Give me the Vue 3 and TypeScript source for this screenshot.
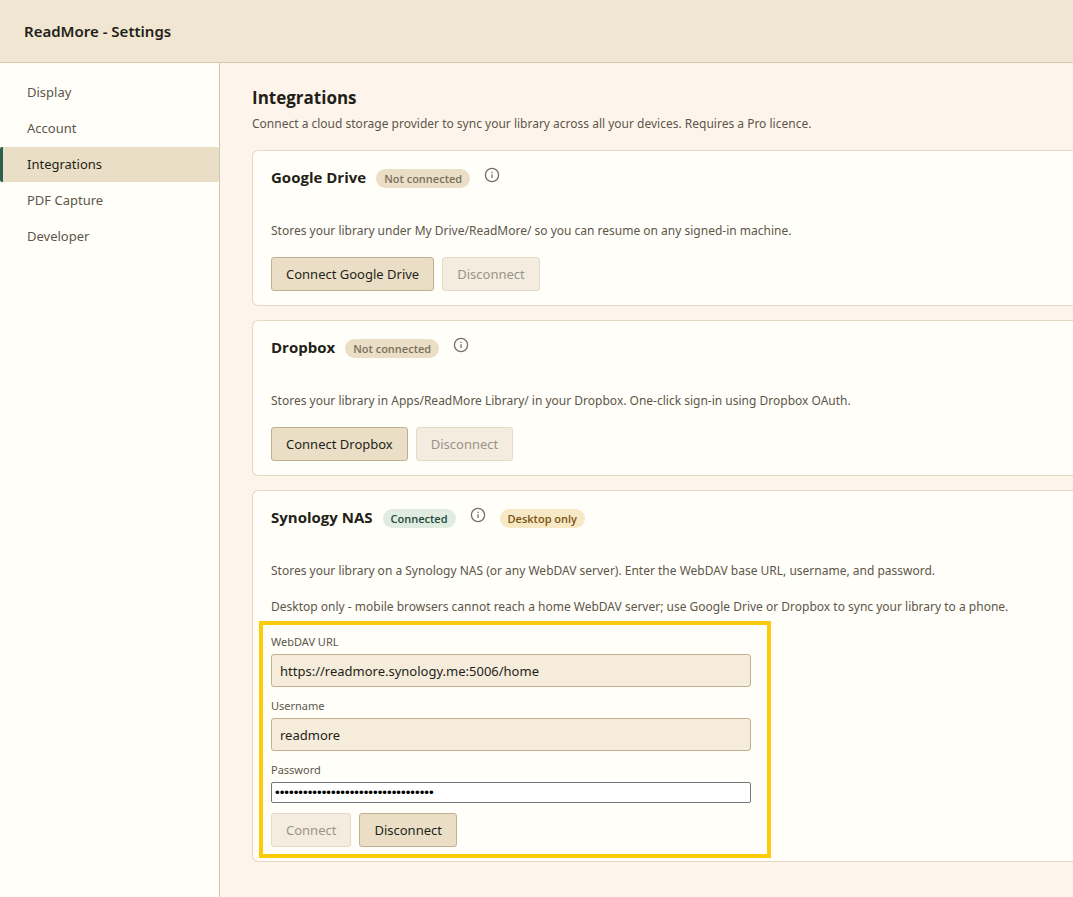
<script setup lang="ts">
import { ref } from 'vue'

interface Provider {
  id: string
  name: string
  description: string
  connectLabel: string
}

const sections: string[] = ['Display', 'Account', 'Integrations', 'PDF Capture', 'Developer']
const active = ref('Integrations')

const providers: Provider[] = [
  {
    id: 'google-drive',
    name: 'Google Drive',
    description: 'Stores your library under My Drive/ReadMore/ so you can resume on any signed-in machine.',
    connectLabel: 'Connect Google Drive',
  },
  {
    id: 'dropbox',
    name: 'Dropbox',
    description: 'Stores your library in Apps/ReadMore Library/ in your Dropbox. One-click sign-in using Dropbox OAuth.',
    connectLabel: 'Connect Dropbox',
  },
]

const url = ref('https://readmore.synology.me:5006/home')
const username = ref('readmore')
const password = ref('x'.repeat(34))
</script>

<template>
  <div class="page">
    <header class="topbar">
      <h1>ReadMore - Settings</h1>
    </header>
    <div class="body">
      <nav class="sidebar" aria-label="Settings sections">
        <a
          v-for="section in sections"
          :key="section"
          href="#"
          :class="['nav-item', { active: section === active }]"
          @click.prevent="active = section"
        >{{ section }}</a>
      </nav>
      <main class="content">
        <h2>Integrations</h2>
        <p class="lead">Connect a cloud storage provider to sync your library across all your devices. Requires a Pro licence.</p>

        <section v-for="p in providers" :key="p.id" class="card">
          <div class="card-head">
            <h3>{{ p.name }}</h3>
            <span class="badge">Not connected</span>
            <button type="button" class="info" :aria-label="'About ' + p.name">
              <svg viewBox="0 0 16 16" width="16" height="16" fill="none" stroke="currentColor">
                <circle cx="8" cy="8" r="6.6" stroke-width="1.3" />
                <path d="M8 7.3v3.6M8 4.8v1.2" stroke-width="1.3" />
              </svg>
            </button>
          </div>
          <p class="desc">{{ p.description }}</p>
          <div class="actions">
            <button type="button" class="btn">{{ p.connectLabel }}</button>
            <button type="button" class="btn" disabled>Disconnect</button>
          </div>
        </section>

        <section class="card">
          <div class="card-head">
            <h3>Synology NAS</h3>
            <span class="badge ok">Connected</span>
            <button type="button" class="info" aria-label="About Synology NAS">
              <svg viewBox="0 0 16 16" width="16" height="16" fill="none" stroke="currentColor">
                <circle cx="8" cy="8" r="6.6" stroke-width="1.3" />
                <path d="M8 7.3v3.6M8 4.8v1.2" stroke-width="1.3" />
              </svg>
            </button>
            <span class="badge warn">Desktop only</span>
          </div>
          <p class="desc">Stores your library on a Synology NAS (or any WebDAV server). Enter the WebDAV base URL, username, and password.</p>
          <p class="desc">Desktop only - mobile browsers cannot reach a home WebDAV server; use Google Drive or Dropbox to sync your library to a phone.</p>
          <form class="webdav" @submit.prevent>
            <label for="nas-url">WebDAV URL</label>
            <input id="nas-url" v-model="url" class="field" type="text" />
            <label for="nas-user">Username</label>
            <input id="nas-user" v-model="username" class="field" type="text" />
            <label for="nas-pass">Password</label>
            <input id="nas-pass" v-model="password" class="secret" type="password" />
            <div class="actions">
              <button type="submit" class="btn" disabled>Connect</button>
              <button type="button" class="btn">Disconnect</button>
            </div>
          </form>
        </section>
      </main>
    </div>
  </div>
</template>

<style>
body {
  margin: 0;
  background: #fdf5ec;
}
</style>

<style scoped>
.page {
  display: flex;
  flex-direction: column;
  min-height: 100vh;
  font-family: 'Noto Sans', 'Open Sans', sans-serif;
  color: #231f18;
}
h1, h2, h3, p {
  margin: 0;
}
h2, h3, .badge {
  font-family: 'Open Sans', 'Noto Sans', sans-serif;
}
.topbar {
  padding: 20px 24px;
  background: #f1e6d2;
  border-bottom: 1px solid #d8c8a8;
}
h1 {
  font-size: 15px;
  line-height: 22px;
  font-weight: 600;
}
.body {
  display: flex;
  flex: 1;
}
.sidebar {
  flex: 0 0 220px;
  box-sizing: border-box;
  display: flex;
  flex-direction: column;
  gap: 1px;
  padding-top: 12px;
  background: #fffef8;
  border-right: 1px solid #d3c7ab;
}
.nav-item {
  padding: 8px 24px;
  border-left: 3px solid transparent;
  border-radius: 2px;
  font-size: 13px;
  line-height: 19px;
  color: #5d564a;
  text-decoration: none;
}
.nav-item.active {
  background: #eadfc6;
  border-left-color: #2f5d4f;
  color: #231f18;
}
.content {
  flex: 1;
  min-width: 0;
  padding: 22px 0 24px 32px;
}
h2 {
  font-size: 17px;
  line-height: 26px;
  font-weight: 700;
}
.lead {
  margin-bottom: 13px;
  font-size: 12px;
  line-height: 26px;
  color: #5d564a;
}
.card {
  margin-bottom: 14px;
  padding: 14px 18px;
  background: #fffef8;
  border: 1px solid #e4dac3;
  border-right: 0;
  border-radius: 6px 0 0 6px;
}
.card-head {
  display: flex;
  align-items: flex-start;
  height: 56px;
}
h3 {
  margin-right: 10px;
  font-size: 15px;
  line-height: 24px;
  font-weight: 700;
}
.badge {
  margin-top: 4px;
  padding: 0 8px;
  border-radius: 10px;
  background: #eadfc6;
  color: #7a705f;
  font-size: 11px;
  line-height: 19px;
  font-weight: 600;
}
.badge.ok {
  background: #dfecdf;
  color: #24493d;
}
.badge.warn {
  background: #f7e8c6;
  color: #7a5412;
}
.info {
  display: flex;
  margin: 2px 14px 0;
  padding: 0;
  border: 0;
  background: none;
  color: #777064;
}
.desc {
  margin-bottom: 16px;
  font-size: 12px;
  line-height: 20px;
  color: #5d564a;
}
.actions {
  display: flex;
  gap: 8px;
}
.btn {
  box-sizing: border-box;
  height: 34px;
  padding: 0 14px;
  border: 1px solid #bfb08e;
  border-radius: 3px;
  background: #eadfc6;
  color: #231f18;
  font-family: inherit;
  font-size: 13px;
}
.btn:disabled {
  background: #f3ecdf;
  border-color: #e3dac8;
  color: #9a9488;
}
.webdav {
  position: relative;
  display: flex;
  flex-direction: column;
  max-width: 480px;
}
.webdav::after {
  content: '';
  position: absolute;
  inset: -12px -20px -11px -12px;
  border: 4px solid #fccc0a;
  pointer-events: none;
}
label {
  font-size: 11px;
  line-height: 18px;
  margin-bottom: 3px;
  color: #5d564a;
}
.field {
  box-sizing: border-box;
  height: 33px;
  margin-bottom: 10px;
  padding: 0 8px;
  border: 1px solid #bfb08e;
  border-radius: 3px;
  background: #f6ecdb;
  color: #231f18;
  font-family: inherit;
  font-size: 13px;
}
.secret {
  box-sizing: border-box;
  height: 21px;
  margin-bottom: 10px;
  padding: 1px 3px;
  border: 1px solid #767676;
  border-radius: 2px;
  background: #fff;
  color: #000;
  font-family: 'Liberation Sans', Arial, sans-serif;
}
</style>
